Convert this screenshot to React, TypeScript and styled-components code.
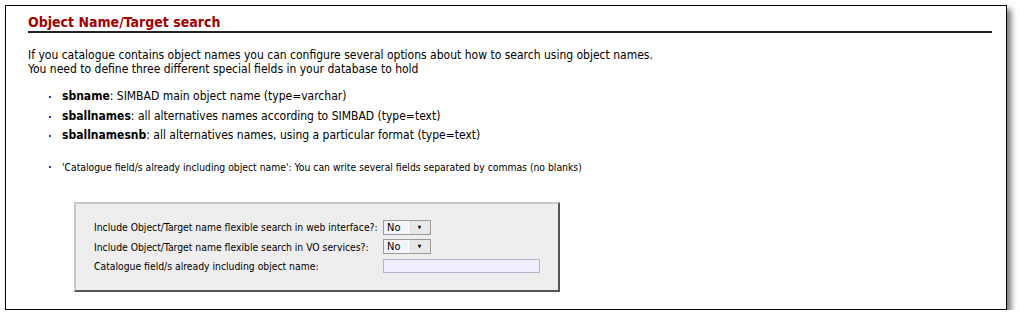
import styled, { createGlobalStyle } from 'styled-components';

const GlobalStyle = createGlobalStyle`
  body {
    margin: 0;
    background: #ffffff;
    font-family: "DejaVu Sans Condensed", "DejaVu Sans", sans-serif;
    color: #000000;
  }
`;

const fields = [
  { name: 'sbname', text: ': SIMBAD main object name (type=varchar)' },
  { name: 'sballnames', text: ': all alternatives names according to SIMBAD (type=text)' },
  { name: 'sballnamesnb', text: ': all alternatives names, using a particular format (type=text)' },
];

const formRows = [
  { label: 'Include Object/Target name flexible search in web interface?:', kind: 'select' },
  { label: 'Include Object/Target name flexible search in VO services?:', kind: 'select' },
  { label: 'Catalogue field/s already including object name:', kind: 'input' },
];

export default function App() {
  return (
    <>
      <GlobalStyle />
      <Frame>
        <Heading>Object Name/Target search</Heading>
        <Intro>
          If you catalogue contains object names you can configure several options about how to search using object names.
          <br />
          You need to define three different special fields in your database to hold
        </Intro>
        <FieldList>
          {fields.map((f) => (
            <FieldItem key={f.name}>
              <b>{f.name}</b>
              {f.text}
            </FieldItem>
          ))}
        </FieldList>
        <NoteList>
          <NoteItem>
            'Catalogue field/s already including object name': You can write several fields separated by commas (no blanks)
          </NoteItem>
        </NoteList>
        <FormBox>
          {formRows.map((row) => (
            <FormRow key={row.label}>
              <Label>{row.label}</Label>
              {row.kind === 'select' ? (
                <Select>
                  <SelectValue>No</SelectValue>
                  <SelectButton>▼</SelectButton>
                </Select>
              ) : (
                <TextInput />
              )}
            </FormRow>
          ))}
        </FormBox>
      </Frame>
    </>
  );
}

const Frame = styled.div`
  margin: 5px 0 0 5px;
  width: 1002px;
  height: 305px;
  box-sizing: border-box;
  border: 1px solid #000000;
  box-shadow: 4px 4px 6px rgba(0, 0, 0, 0.55);
  padding: 8px 14px 0 22px;
`;

const Heading = styled.h2`
  margin: 0;
  font-size: 14px;
  font-weight: bold;
  color: #a00000;
  padding-bottom: 1px;
  border-bottom: 2px solid #222222;
  line-height: 16px;
`;

const Intro = styled.p`
  margin: 15px 0 0;
  font-size: 12px;
  line-height: 14px;
`;

const FieldList = styled.ul`
  margin: 11px 0 0;
  padding-left: 34px;
  font-size: 12px;
  color: #000000;
  list-style: none;
`;

const FieldItem = styled.li`
  position: relative;
  line-height: 19.5px;
  &::before {
    content: '';
    position: absolute;
    left: -13px;
    top: 9px;
    width: 2px;
    height: 2px;
    background: #3a3a8a;
  }
`;

const NoteList = styled(FieldList)`
  margin-top: 14px;
  font-size: 10.3px;
`;

const NoteItem = styled(FieldItem)`
  line-height: 14px;
  &::before {
    top: 6px;
  }
`;

const FormBox = styled.div`
  margin: 28px 0 0 46px;
  width: 486px;
  height: 90px;
  box-sizing: border-box;
  background: #eeeeee;
  border: 2px solid;
  border-color: #c8c8c8 #555555 #555555 #c8c8c8;
  padding: 16px 0 0 18px;
  display: flex;
  flex-direction: column;
  gap: 4.5px;
`;

const FormRow = styled.div`
  display: flex;
  align-items: center;
`;

const Label = styled.span`
  width: 289px;
  flex-shrink: 0;
  white-space: nowrap;
  font-size: 10.3px;
`;

const Select = styled.div`
  display: flex;
  width: 48px;
  height: 15px;
  box-sizing: border-box;
  border: 1px solid #9a9a9a;
  background: #f4f4ff;
`;

const SelectValue = styled.span`
  flex: 1;
  font-size: 11px;
  line-height: 13px;
  padding-left: 3px;
  background: #f4f4ff;
`;

const SelectButton = styled.span`
  width: 21px;
  font-size: 5px;
  line-height: 13px;
  text-align: center;
  background: #e8e8e8;
  border-left: 1px solid #ffffff;
  color: #000;
`;

const TextInput = styled.div`
  width: 157px;
  height: 14px;
  box-sizing: border-box;
  border: 1px solid #b4b4c8;
  background: #eeeeff;
`;
